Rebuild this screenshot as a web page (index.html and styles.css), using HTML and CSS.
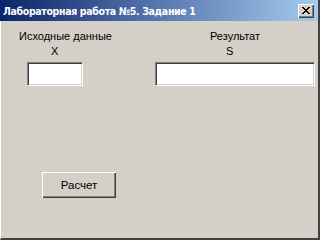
FILE: index.html
```html
<!DOCTYPE html>
<html>
<head>
<meta charset="utf-8">
<link rel="stylesheet" href="styles.css">
</head>
<body>
<div class="window">
  <div class="titlebar">
    <span class="title">Лабораторная работа №5. Задание 1</span>
    <button class="close" aria-label="Закрыть">
      <svg width="8" height="7" viewBox="0 0 8 7"><path d="M0 0h2v1h1v1h2v-1h1v-1h2v1h-1v1h-1v1h-1v1h1v1h1v1h1v1h-2v-1h-1v-1h-2v1h-1v1h-2v-1h1v-1h1v-1h1v-1h-1v-1h-1v-1h-1z" fill="#000"/></svg>
    </button>
  </div>
  <div class="content">
    <div class="fields">
      <div class="col col-left">
        <div class="label">Исходные данные</div>
        <div class="var var-x">X</div>
        <div class="input input-x"></div>
      </div>
      <div class="col col-right">
        <div class="label label-res">Результат</div>
        <div class="var var-s">S</div>
        <div class="input input-s"></div>
      </div>
    </div>
    <button class="btn">Расчет</button>
  </div>
</div>
</body>
</html>
```
FILE: styles.css
```css
html, body {
  margin: 0;
  padding: 0;
  background: #d4d0c8;
}
.window {
  width: 320px;
  height: 240px;
  box-sizing: border-box;
  background: #d4d0c8;
  border-left: 1px solid #ffffff;
  border-right: 2px solid #404040;
  border-bottom: 2px solid #404040;
  display: flex;
  flex-direction: column;
  font-family: "Liberation Sans", Arial, sans-serif;
  font-size: 11px;
  color: #000;
}
.titlebar {
  height: 21px;
  margin-left: -1px;
  background: linear-gradient(to right, #0a246a, #a6caf0);
  display: flex;
  align-items: center;
  justify-content: space-between;
  padding: 0 4px 0 3px;
}
.title {
  color: #fff;
  font-family: "DejaVu Sans Condensed", "DejaVu Sans", sans-serif;
  font-stretch: condensed;
  font-weight: bold;
  font-size: 10.5px;
  letter-spacing: -0.35px;
  white-space: nowrap;
}
.close {
  width: 16px;
  height: 14px;
  padding: 0;
  margin: 0;
  background: #d4d0c8;
  border: none;
  box-shadow: inset 1px 1px 0 #ffffff, inset -1px -1px 0 #404040, inset -2px -2px 0 #808080;
  display: flex;
  align-items: center;
  justify-content: center;
}
.close svg { display: block; }
.content {
  flex: 1;
  display: flex;
  flex-direction: column;
  padding: 9px 0 0 0;
}
.fields {
  display: flex;
}
.col {
  display: flex;
  flex-direction: column;
  line-height: 13px;
}
.col-left {
  margin-left: 18px;
  width: 100px;
}
.col-right {
  margin-left: 36px;
}
.label { white-space: nowrap; }
.var { margin-top: 2px; }
.var-x { margin-left: 32px; }
.label-res { margin-left: 55px; }
.var-s { margin-left: 71px; }
.input {
  margin-top: 4px;
  height: 24px;
  box-sizing: border-box;
  background: #fff;
  border-top: 1px solid #808080;
  border-left: 1px solid #808080;
  border-right: 1px solid #ffffff;
  border-bottom: 1px solid #ffffff;
  box-shadow: inset 1px 1px 0 #404040, inset -1px -1px 0 #d4d0c8;
}
.input-x { width: 56px; margin-left: 8px; }
.input-s { width: 160px; }
.btn {
  align-self: flex-start;
  margin: 86px 0 0 41px;
  width: 74px;
  height: 26px;
  padding: 0;
  background: #d4d0c8;
  border: none;
  font-family: "Liberation Sans", Arial, sans-serif;
  font-size: 11.5px;
  color: #000;
  box-shadow: inset 1px 1px 0 #ffffff, inset -1px -1px 0 #404040, inset -2px -2px 0 #808080;
}
```
